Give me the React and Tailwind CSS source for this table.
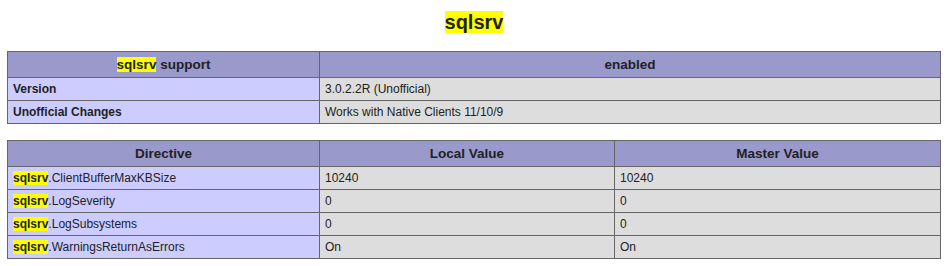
import React from "react";

const directives = [
  { name: "ClientBufferMaxKBSize", local: "10240", master: "10240" },
  { name: "LogSeverity", local: "0", master: "0" },
  { name: "LogSubsystems", local: "0", master: "0" },
  { name: "WarningsReturnAsErrors", local: "On", master: "On" },
];

const th = "border border-[#666] bg-[#99c] px-[5px] py-[4px] text-center text-[13.5px] font-bold leading-[17px]";
const tdE = "border border-[#666] bg-[#ccf] px-[5px] py-[4px] text-[12px] leading-[14px]";
const tdV = "border border-[#666] bg-[#ddd] px-[5px] py-[4px] text-[12px] leading-[14px]";

const Mark = ({ children }) => <span className="bg-[#ff0] font-bold">{children}</span>;

const App = () => {
  return (
    <div className="min-h-[266px] bg-white pt-[11px] font-['Liberation_Sans',Arial,sans-serif] text-[#222]">
      <h2 className="text-center text-[20px] font-bold leading-[23px]">
        <span className="bg-[#ff0]">sqlsrv</span>
      </h2>

      <table className="mx-auto mt-[17px] w-[934px] table-fixed border-collapse text-left">
        <colgroup>
          <col className="w-[312px]" />
          <col />
        </colgroup>
        <thead>
          <tr>
            <th className={th}>
              <Mark>sqlsrv</Mark> support
            </th>
            <th className={th}>enabled</th>
          </tr>
        </thead>
        <tbody>
          <tr>
            <td className={`${tdE} font-bold`}>Version</td>
            <td className={tdV}>3.0.2.2R (Unofficial)</td>
          </tr>
          <tr>
            <td className={`${tdE} font-bold`}>Unofficial Changes</td>
            <td className={tdV}>Works with Native Clients 11/10/9</td>
          </tr>
        </tbody>
      </table>

      <table className="mx-auto mt-[16px] w-[934px] table-fixed border-collapse text-left">
        <colgroup>
          <col className="w-[312px]" />
          <col className="w-[295px]" />
          <col />
        </colgroup>
        <thead>
          <tr>
            <th className={th}>Directive</th>
            <th className={th}>Local Value</th>
            <th className={th}>Master Value</th>
          </tr>
        </thead>
        <tbody>
          {directives.map((d) => (
            <tr key={d.name}>
              <td className={tdE}>
                <Mark>sqlsrv</Mark>.{d.name}
              </td>
              <td className={tdV}>{d.local}</td>
              <td className={tdV}>{d.master}</td>
            </tr>
          ))}
        </tbody>
      </table>
    </div>
  );
};

export default App;
